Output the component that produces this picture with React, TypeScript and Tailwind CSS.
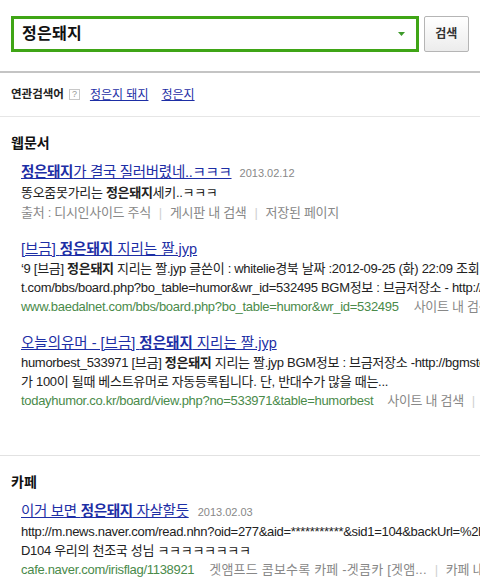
import React from "react";

const font = { fontFamily: '"Liberation Sans", "Noto Sans CJK KR", sans-serif' };

function Sep() {
  return <span className="mx-[8px] text-[#d0d0d0]">|</span>;
}

function B({ children }: { children: React.ReactNode }) {
  return <b className="font-bold">{children}</b>;
}

export default function App() {
  return (
    <div className="w-[480px] h-[582px] overflow-hidden bg-white text-[12px] text-[#222]" style={font}>
      {/* header */}
      <div className="h-[73px] border-b-2 border-[#c4c4c4] px-[11px] pt-[16px] flex gap-[5px]">
        <div className="w-[413px] h-[36px] border-[3px] border-[#3fa516] flex items-center pl-[8px] pr-[11px]">
          <span className="flex-1 text-[16px] font-semibold text-[#111] tracking-[0.3px]">정은돼지</span>
          <svg width="7" height="4" viewBox="0 0 7 4"><path d="M0 0H7L3.5 4Z" fill="#3d9a2a" /></svg>
        </div>
        <div className="w-[46px] h-[36px] border border-[#b5b5b5] rounded-[2px] bg-gradient-to-b from-white to-[#ececec] flex items-center justify-center text-[12px] font-bold text-[#333]">
          검색
        </div>
      </div>

      {/* related */}
      <div className="h-[44px] border-b border-[#e6e6e6] px-[11px] flex items-center whitespace-nowrap">
        <span className="font-bold text-[11.5px] text-[#222]">연관검색어</span>
        <span className="ml-[5px] w-[11px] h-[11px] border border-[#c8c8c8] text-[9px] leading-[9px] text-[#999] flex items-center justify-center">?</span>
        <a className="ml-[10px] text-[#1d2ea5] underline">정은지 돼지</a>
        <a className="ml-[13px] text-[#1d2ea5] underline">정은지</a>
      </div>

      {/* web docs */}
      <div className="px-[11px] pt-[16px] pb-[45px] border-b border-[#e2e2e2]">
        <div className="text-[14px] leading-[20px] font-bold text-[#111]">웹문서</div>
        <div className="pl-[10px] mt-[9px] whitespace-nowrap text-[13px] tracking-[-0.3px]">
          <div className="leading-[20px] text-[14.5px]">
            <a className="text-[#1d2ea5] underline"><B>정은돼지</B>가 결국 질러버렸네..ㅋㅋㅋ</a>
            <span className="ml-[8px] text-[11px] tracking-normal text-[#888]">2013.02.12</span>
          </div>
          <div className="leading-[20px]">똥오줌못가리는 <B>정은돼지</B>세키..ㅋㅋㅋ</div>
          <div className="leading-[20px] text-[#888]">
            출처 : 디시인사이드 주식<Sep />게시판 내 검색<Sep />저장된 페이지
          </div>

          <div className="mt-[16px] leading-[20px] text-[14.5px] tracking-[0px]">
            <a className="text-[#1d2ea5] underline">[브금] <B>정은돼지</B> 지리는 짤.jyp</a>
          </div>
          <div className="leading-[19px]">‘9 [브금] <B>정은돼지</B> 지리는 짤.jyp 글쓴이 : whitelie경북 날짜 :2012-09-25 (화) 22:09 조회 : 123</div>
          <div className="leading-[19px]">t.com/bbs/board.php?bo_table=humor&amp;wr_id=532495 BGM정보 : 브금저장소 - http://bgmstore.net</div>
          <div className="leading-[19px]">
            <span className="text-[#4a8a4a]">www.baedalnet.com/bbs/board.php?bo_table=humor&amp;wr_id=532495</span>
            <span className="ml-[15px] text-[#888]">사이트 내 검색</span>
          </div>

          <div className="mt-[17px] leading-[20px] text-[14.5px] tracking-[0px]">
            <a className="text-[#1d2ea5] underline">오늘의유머 - [브금] <B>정은돼지</B> 지리는 짤.jyp</a>
          </div>
          <div className="leading-[19px]">humorbest_533971 [브금] <B>정은돼지</B> 지리는 짤.jyp BGM정보 : 브금저장소 -http://bgmstore.net</div>
          <div className="leading-[19px]">가 100이 될때 베스트유머로 자동등록됩니다. 단, 반대수가 많을 때는...</div>
          <div className="leading-[19px]">
            <span className="text-[#4a8a4a]">todayhumor.co.kr/board/view.php?no=533971&amp;table=humorbest</span>
            <span className="ml-[14px] text-[#888]">사이트 내 검색</span>
            <Sep />
            <span className="text-[#888]">저장된 페이지</span>
          </div>
        </div>
      </div>

      {/* cafe */}
      <div className="px-[11px] pt-[16px]">
        <div className="text-[14px] leading-[20px] font-bold text-[#111]">카페</div>
        <div className="pl-[10px] mt-[9px] whitespace-nowrap text-[13px] tracking-[-0.3px]">
          <div className="leading-[20px] text-[14.5px]">
            <a className="text-[#1d2ea5] underline">이거 보면 <B>정은돼지</B> 자살할듯</a>
            <span className="ml-[9px] text-[11px] tracking-normal text-[#888]">2013.02.03</span>
          </div>
          <div className="leading-[19px]">http://m.news.naver.com/read.nhn?oid=277&amp;aid=***********&amp;sid1=104&amp;backUrl=%2Fhome.nhn%3Fsid1%3</div>
          <div className="leading-[19px]">D104 우리의 천조국 성님 ㅋㅋㅋㅋㅋㅋㅋㅋ</div>
          <div className="leading-[19px]">
            <span className="text-[#4a8a4a]">cafe.naver.com/irisflag/1138921</span>
            <span className="ml-[15px] text-[#888] tracking-[0.2px]">겟앰프드 콤보수록 카페 -겟콤카 [겟앰...</span>
            <Sep />
            <span className="text-[#888]">카페 내 검색</span>
          </div>
        </div>
      </div>
    </div>
  );
}
